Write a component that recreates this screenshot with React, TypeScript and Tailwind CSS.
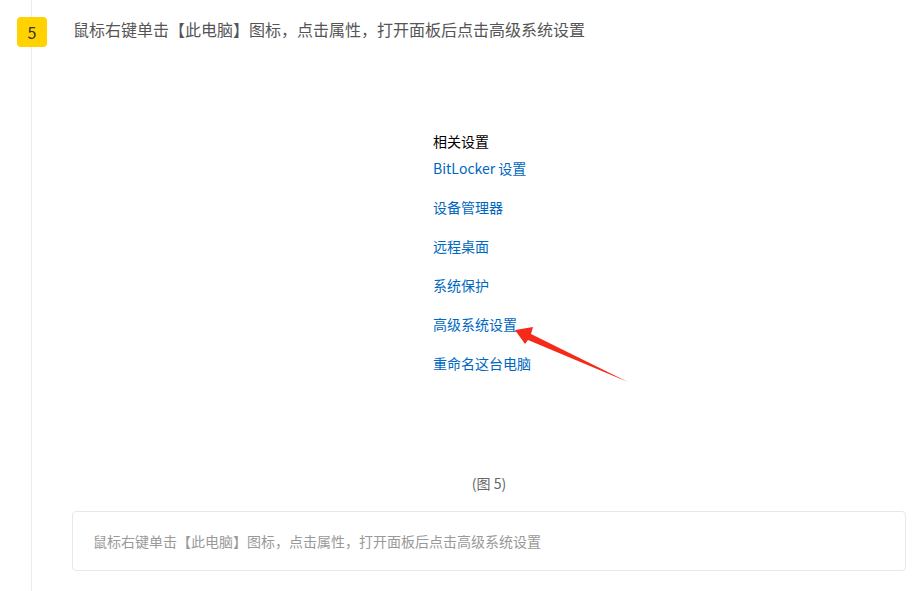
const links = ["BitLocker 设置", "设备管理器", "远程桌面", "系统保护", "高级系统设置", "重命名这台电脑"]

export default function App() {
  const step = "鼠标右键单击【此电脑】图标，点击属性，打开面板后点击高级系统设置"

  return (
    <div className="w-[917px] h-[591px] overflow-hidden bg-white font-['Noto_Sans_CJK_SC','Noto_Sans',sans-serif]">
      {/* timeline column */}
      <div className="relative ml-[31px] h-full border-l border-[#ececec] pl-[40px] pr-[11px]">
        {/* step badge */}
        <div className="absolute left-[-15px] top-[17px] flex h-[30px] w-[30px] items-center justify-center rounded-[4px] bg-[#ffd200] text-[16px] text-[#333]">
          5
        </div>

        <p className="ml-[1px] pt-[17px] text-[16px] leading-[24px] text-[#555]">{step}</p>

        {/* screenshot */}
        <div className="flex h-[432px] justify-center pt-[90px]">
          <div className="w-[240px] pl-[64px]">
            <div className="relative">
              <p className="text-[14px] leading-[20px] text-black">相关设置</p>
              <div className="mt-[7px] flex flex-col gap-[19px]">
                {links.map((l) => (
                  <span key={l} className="text-[14px] leading-[20px] text-[#0067c0]">{l}</span>
                ))}
              </div>
              <svg className="pointer-events-none absolute left-0 top-0" width="200" height="260" viewBox="0 0 200 260">
                <polygon points="82,199 100,196 98,203 195,251 95,209 92,213" fill="#f52a1a" />
              </svg>
            </div>
          </div>
        </div>

        <p className="text-center text-[14px] leading-[20px] text-[#666]">(图 5)</p>

        <div className="mt-[18px] flex h-[60px] items-center rounded-[4px] border border-[#e8e8e8] px-[20px] text-[14px] text-[#999]">
          {step}
        </div>
      </div>
    </div>
  )
}
